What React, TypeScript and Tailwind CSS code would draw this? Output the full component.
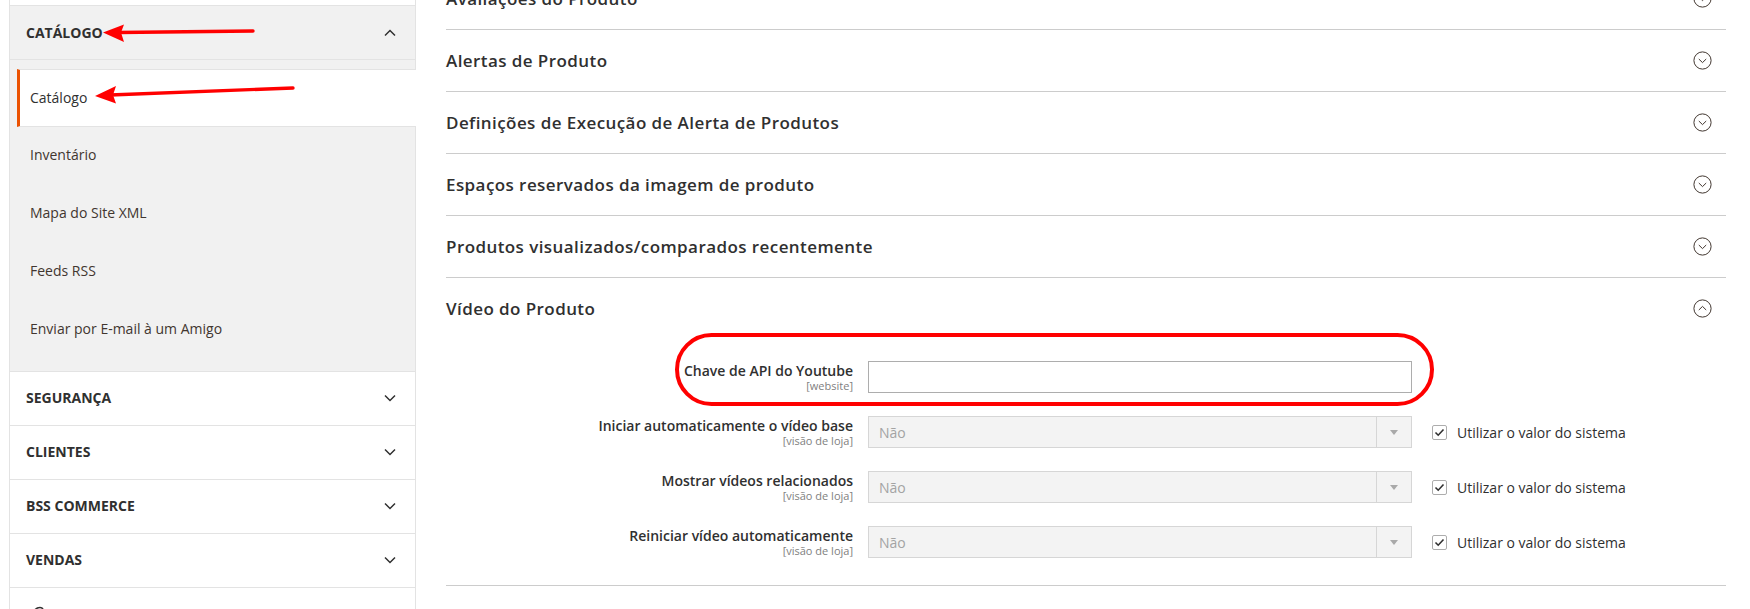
import type { FC } from 'react';

const ChevronDown: FC = () => (
  <svg width="12" height="8" viewBox="0 0 12 8" fill="none">
    <path d="M1 1.5 L6 6.5 L11 1.5" stroke="#303030" strokeWidth="1.5" />
  </svg>
);

const ChevronUp: FC = () => (
  <svg width="12" height="8" viewBox="0 0 12 8" fill="none">
    <path d="M1 6.5 L6 1.5 L11 6.5" stroke="#303030" strokeWidth="1.5" />
  </svg>
);

const CircleToggle: FC<{ open?: boolean }> = ({ open }) => (
  <svg width="19" height="19" viewBox="0 0 19 19" fill="none">
    <circle cx="9.5" cy="9.5" r="8.6" stroke="#41362f" strokeWidth="1" />
    {open ? (
      <path d="M5.8 11 L9.5 7.4 L13.2 11" stroke="#41362f" strokeWidth="1" />
    ) : (
      <path d="M5.8 8 L9.5 11.6 L13.2 8" stroke="#41362f" strokeWidth="1" />
    )}
  </svg>
);

const subItems = ['Inventário', 'Mapa do Site XML', 'Feeds RSS', 'Enviar por E-mail à um Amigo'];
const sections = ['SEGURANÇA', 'CLIENTES', 'BSS COMMERCE', 'VENDAS'];
const groups = [
  'Avaliações do Produto',
  'Alertas de Produto',
  'Definições de Execução de Alerta de Produtos',
  'Espaços reservados da imagem de produto',
  'Produtos visualizados/comparados recentemente',
];
const selects = [
  'Iniciar automaticamente o vídeo base',
  'Mostrar vídeos relacionados',
  'Reiniciar vídeo automaticamente',
];

const Sidebar: FC = () => (
  <aside className="ml-[9px] w-[407px] shrink-0 border-x border-[#e3e3e3]">
    <div className="h-[6px] border-b border-[#e3e3e3] bg-white" />
    <div className="flex h-[54px] items-center justify-between border-b border-[#e3e3e3] bg-[#f1f1f1] pl-[16px] pr-[19px]">
      <span className="text-[14px] font-bold text-[#303030]">CATÁLOGO</span>
      <ChevronUp />
    </div>
    <ul className="border-b border-[#e3e3e3] bg-[#f1f1f1] pb-[12px] pt-[9px]">
      <li className="-mr-[1px] ml-[7px] flex h-[58px] items-center border-y border-l-[3px] border-y-[#e3e3e3] border-l-[#eb5202] bg-white pb-[2px] pl-[10px] text-[14px] text-[#303030]">
        Catálogo
      </li>
      {subItems.map((item) => (
        <li key={item} className="flex h-[58px] items-center pb-[3px] pl-[20px] text-[14px] text-[#41362f]">
          {item}
        </li>
      ))}
    </ul>
    {sections.map((s) => (
      <div
        key={s}
        className="flex h-[54px] items-center justify-between border-b border-[#e3e3e3] bg-white pb-[2px] pl-[16px] pr-[19px]"
      >
        <span className="text-[14px] font-bold text-[#303030]">{s}</span>
        <ChevronDown />
      </div>
    ))}
    <div className="h-[40px] bg-white pl-[21px] pt-[18px]">
      <svg width="14" height="10" viewBox="0 0 14 10" fill="none">
        <path d="M1.5 8 Q4 1.5 9 1.5 Q11 1.5 12 3" stroke="#303030" strokeWidth="1.6" />
      </svg>
    </div>
  </aside>
);

const FieldLabel: FC<{ label: string; scope: string }> = ({ label, scope }) => (
  <div className="w-[407px] pt-[1px] text-right">
    <span className="block text-[14px] font-semibold leading-[18px] text-[#303030]">{label}</span>
    <span className="block text-[11px] leading-[12px] text-[#808080]">{scope}</span>
  </div>
);

const SelectField: FC<{ label: string }> = ({ label }) => (
  <div className="flex items-start">
    <FieldLabel label={label} scope="[visão de loja]" />
    <div className="ml-[15px] flex h-[32px] w-[544px] border border-[#d6d6d6] bg-[#f3f3f3]">
      <span className="flex flex-1 items-center pl-[10px] text-[14px] text-[#a3a3a3]">Não</span>
      <span className="flex w-[35px] items-center justify-center border-l border-[#d6d6d6]">
        <svg width="8" height="5" viewBox="0 0 8 5">
          <path d="M0 0 H8 L4 5 Z" fill="#a9a9a9" />
        </svg>
      </span>
    </div>
    <label className="ml-[20px] flex h-[32px] items-center">
      <span className="flex h-[15px] w-[15px] items-center justify-center rounded-[2px] border border-[#adadad] bg-white">
        <svg width="11" height="9" viewBox="0 0 11 9" fill="none">
          <path d="M1.5 4.5 L4.2 7.2 L9.5 1.5" stroke="#303030" strokeWidth="1.6" />
        </svg>
      </span>
      <span className="ml-[10px] text-[14px] text-[#303030]">Utilizar o valor do sistema</span>
    </label>
  </div>
);

const Main: FC = () => (
  <main className="-mt-[32px] ml-[30px] w-[1280px] shrink-0">
    {groups.map((g) => (
      <div key={g} className="flex h-[62px] items-center justify-between border-b border-[#cccccc] pr-[14px]">
        <span className="text-[17px] font-semibold tracking-[0.025em] text-[#303030]">{g}</span>
        <CircleToggle />
      </div>
    ))}
    <section className="border-b border-[#cccccc] pb-[27px]">
      <div className="flex h-[61px] items-center justify-between pr-[14px]">
        <span className="text-[17px] font-semibold tracking-[0.025em] text-[#303030]">Vídeo do Produto</span>
        <CircleToggle open />
      </div>
      <div className="flex flex-col gap-[23px] pt-[22px]">
        <div className="flex items-start">
          <FieldLabel label="Chave de API do Youtube" scope="[website]" />
          <input
            type="text"
            className="ml-[15px] h-[32px] w-[544px] border border-[#adadad] bg-white px-[10px] text-[14px] outline-none"
          />
        </div>
        {selects.map((s) => (
          <SelectField key={s} label={s} />
        ))}
      </div>
    </section>
  </main>
);

const Annotations: FC = () => (
  <>
    <svg className="pointer-events-none absolute left-0 top-0" width="1750" height="609">
      <line x1="118" y1="32.5" x2="253" y2="31" stroke="#ff0000" strokeWidth="3.4" strokeLinecap="round" />
      <polygon points="103,32.5 124,24.5 121,32.5 124,42" fill="#ff0000" />
      <line x1="110" y1="95" x2="293" y2="88" stroke="#ff0000" strokeWidth="3.4" strokeLinecap="round" />
      <polygon points="95,96 116,86 113,95 116,103.5" fill="#ff0000" />
    </svg>
    <div className="pointer-events-none absolute left-[675px] top-[333px] h-[73px] w-[759px] rounded-full border-4 border-[#ff0000]" />
  </>
);

const App: FC = () => (
  <div className="relative flex h-[609px] w-[1750px] items-start overflow-hidden bg-white font-['Open_Sans',sans-serif]">
    <Sidebar />
    <Main />
    <Annotations />
  </div>
);

export default App;
